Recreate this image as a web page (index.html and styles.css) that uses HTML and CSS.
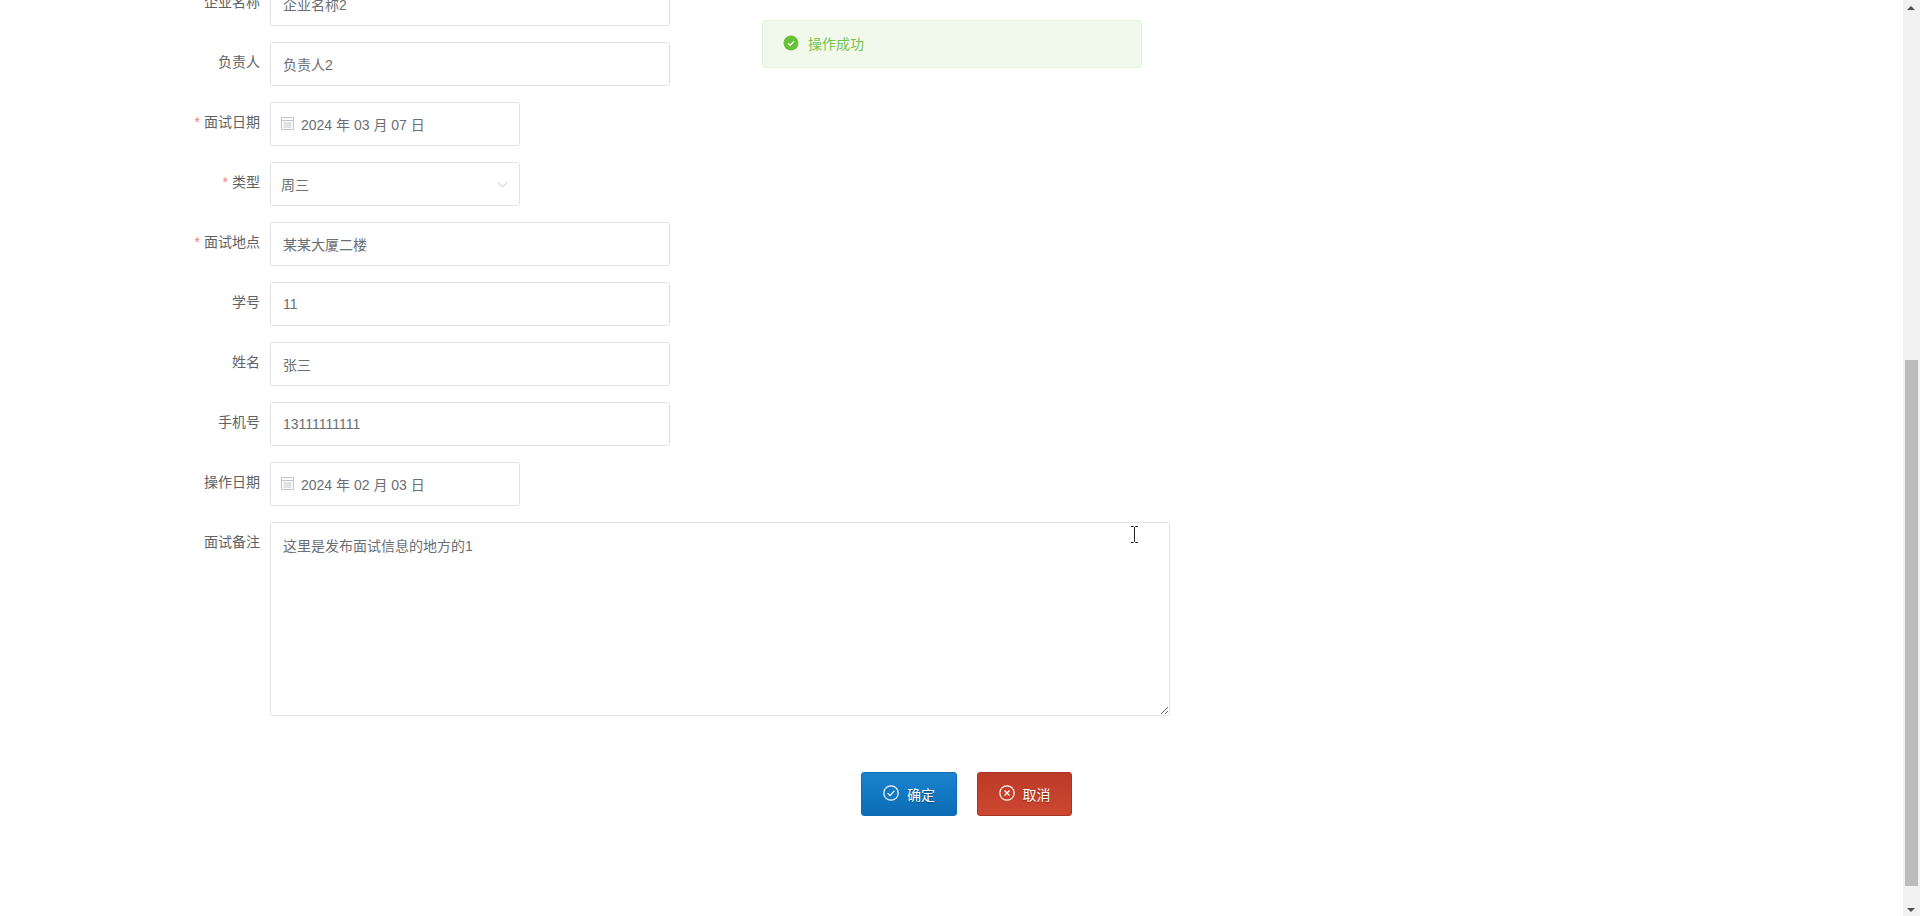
FILE: index.html
```html
<!DOCTYPE html>
<html>
<head>
<title>面试信息</title>
<meta charset="utf-8">
<link rel="stylesheet" href="styles.css">
</head>
<body>

<div class="shell">
  <div class="page">
    <form class="detail-form">
      <div class="form-row">
        <label class="form-label">企业名称</label>
        <input class="text-input" type="text" value="企业名称2">
      </div>
      <div class="form-row">
        <label class="form-label">负责人</label>
        <input class="text-input" type="text" value="负责人2">
      </div>
      <div class="form-row">
        <label class="form-label required">面试日期</label>
        <div class="date-input">
          <svg class="date-icon" viewBox="0 0 13 13" width="13" height="13">
            <path d="M.5 .5h12v12h-12z M.5 3.5h12 M2.5 6h8 M2.5 8h8 M2.5 10h8" fill="none" stroke="#c0c4cc" stroke-width="1"/>
          </svg>
          <span>2024 年 03 月 07 日</span>
        </div>
      </div>
      <div class="form-row">
        <label class="form-label required">类型</label>
        <div class="select-input">
          <span>周三</span>
          <svg class="select-arrow" viewBox="0 0 11 7" width="11" height="7">
            <path d="M.5 1l5 5 5-5" fill="none" stroke="#c0c4cc" stroke-width="1"/>
          </svg>
        </div>
      </div>
      <div class="form-row">
        <label class="form-label required">面试地点</label>
        <input class="text-input" type="text" value="某某大厦二楼">
      </div>
      <div class="form-row">
        <label class="form-label">学号</label>
        <input class="text-input" type="text" value="11">
      </div>
      <div class="form-row">
        <label class="form-label">姓名</label>
        <input class="text-input" type="text" value="张三">
      </div>
      <div class="form-row">
        <label class="form-label">手机号</label>
        <input class="text-input" type="text" value="13111111111">
      </div>
      <div class="form-row">
        <label class="form-label">操作日期</label>
        <div class="date-input">
          <svg class="date-icon" viewBox="0 0 13 13" width="13" height="13">
            <path d="M.5 .5h12v12h-12z M.5 3.5h12 M2.5 6h8 M2.5 8h8 M2.5 10h8" fill="none" stroke="#c0c4cc" stroke-width="1"/>
          </svg>
          <span>2024 年 02 月 03 日</span>
        </div>
      </div>
      <div class="form-row">
        <label class="form-label">面试备注</label>
        <textarea class="text-area">这里是发布面试信息的地方的1</textarea>
      </div>

      <div class="form-actions">
        <button class="btn btn-confirm" type="button">
          <svg viewBox="0 0 16 16" width="16" height="16">
            <circle cx="8" cy="8" r="7.2" fill="none" stroke="#fff" stroke-width="1.2"/>
            <path d="M4.6 8.2l2.4 2.4 4.4-4.8" fill="none" stroke="#fff" stroke-width="1.2"/>
          </svg>
          确定
        </button>
        <button class="btn btn-cancel" type="button">
          <svg viewBox="0 0 16 16" width="16" height="16">
            <circle cx="8" cy="8" r="7.2" fill="none" stroke="#fff" stroke-width="1.2"/>
            <path d="M5.5 5.5l5 5 M10.5 5.5l-5 5" fill="none" stroke="#fff" stroke-width="1.3"/>
          </svg>
          取消
        </button>
      </div>
    </form>
  </div>

  <div class="scrollbar">
    <div class="scroll-arrow-up"></div>
    <div class="scroll-thumb"></div>
    <div class="scroll-arrow-down"></div>
  </div>
</div>

<!-- toast sits over the page -->
<div class="message">
  <svg viewBox="0 0 16 16" width="16" height="16">
    <circle cx="8" cy="8" r="7.5" fill="#67c23a"/>
    <path d="M5 8.2l2.2 2.1L11 6.4" fill="none" stroke="#fff" stroke-width="1.3"/>
  </svg>
  <span>操作成功</span>
</div>

<!-- mouse cursor -->
<svg class="cursor" viewBox="0 0 9 17" width="9" height="17">
  <path d="M1 .5h2.5l1 1 1-1H8 M4.5 1.5v14 M1 16.5h2.5l1-1 1 1H8" fill="none" stroke="#222" stroke-width="1"/>
</svg>

</body>
</html>
```

FILE: styles.css
```css
/* --- base --- */
html, body {
  margin: 0;
  padding: 0;
  height: 100%;
  background-color: #fff;
  overflow: hidden;
}

body, input, textarea, button {
  font-family: "Liberation Sans", "Noto Sans CJK SC", sans-serif;
  font-size: 14px;
  color: #6b6e73;
}

.shell {
  display: flex;
  height: 916px;
}

.page {
  flex: 1;
  overflow: hidden;
}

/* first row is scrolled partly out of view */
.detail-form {
  margin-top: -18px;
  padding-left: 160px;
}

.form-row {
  display: flex;
  align-items: flex-start;
  margin-bottom: 16px;
}

.form-label {
  width: 110px;
  padding-right: 10px;
  box-sizing: border-box;
  text-align: right;
  line-height: 40px;
  color: #606266;
}

.form-label.required::before {
  content: "*";
  color: #f08080;
  margin-right: 4px;
}

/* --- inputs --- */
.text-input, .date-input, .select-input, .text-area {
  box-sizing: border-box;
  height: 44px;
  background-color: #fff;
  border: 1px solid #e0e2e7;
  border-radius: 3px;
  outline: none;
  margin: 0;
}

.text-input {
  width: 400px;
  padding: 0 12px;
}

.date-input {
  width: 250px;
  display: flex;
  align-items: center;
  padding: 0 0 0 10px;
}

.date-icon {
  margin: -2px 7px 0 0;
}

.select-input {
  width: 250px;
  display: flex;
  align-items: center;
  justify-content: space-between;
  padding: 0 11px 0 10px;
}

.text-area {
  display: block;
  width: 900px;
  height: 194px;
  padding: 13px 12px;
  line-height: 20px;
}

/* --- buttons --- */
.form-actions {
  display: flex;
  gap: 20px;
  margin: 56px 0 0 701px;
}

.btn {
  display: flex;
  align-items: center;
  justify-content: center;
  gap: 8px;
  height: 44px;
  padding: 0;
  border-radius: 3px;
  color: #fff;
  text-shadow: 0 1px 1px rgba(0, 0, 0, 0.35);
}

.btn svg {
  margin-top: -2px;
}

.btn-confirm {
  width: 96px;
  border: 1px solid #0b6cb3;
  background: linear-gradient(#1c83d0, #0a6cb4);
}

.btn-cancel {
  width: 95px;
  border: 1px solid #aa3322;
  background: linear-gradient(#bd3a26, #cb4731);
}

/* --- fake window scrollbar --- */
.scrollbar {
  position: relative;
  width: 17px;
  background-color: #f1f1f1;
}

.scroll-thumb {
  position: absolute;
  top: 360px;
  left: 2px;
  width: 13px;
  height: 526px;
  background-color: #bcbcbc;
}

.scroll-arrow-down {
  position: absolute;
  bottom: 4px;
  left: 4px;
  border-left: 4px solid transparent;
  border-right: 4px solid transparent;
  border-top: 4px solid #505050;
}

.scroll-arrow-up {
  position: absolute;
  top: 6px;
  left: 4px;
  border-left: 4px solid transparent;
  border-right: 4px solid transparent;
  border-bottom: 4px solid #505050;
}

/* --- toast --- */
.message {
  position: fixed;
  top: 20px;
  left: 762px;
  display: flex;
  align-items: center;
  gap: 9px;
  box-sizing: border-box;
  width: 380px;
  height: 48px;
  padding: 0 0 2px 20px;
  background-color: #f0f9eb;
  border: 1px solid #e1f3d8;
  border-radius: 4px;
  color: #76c24f;
}

.cursor {
  position: fixed;
  left: 1130px;
  top: 526px;
}
```
